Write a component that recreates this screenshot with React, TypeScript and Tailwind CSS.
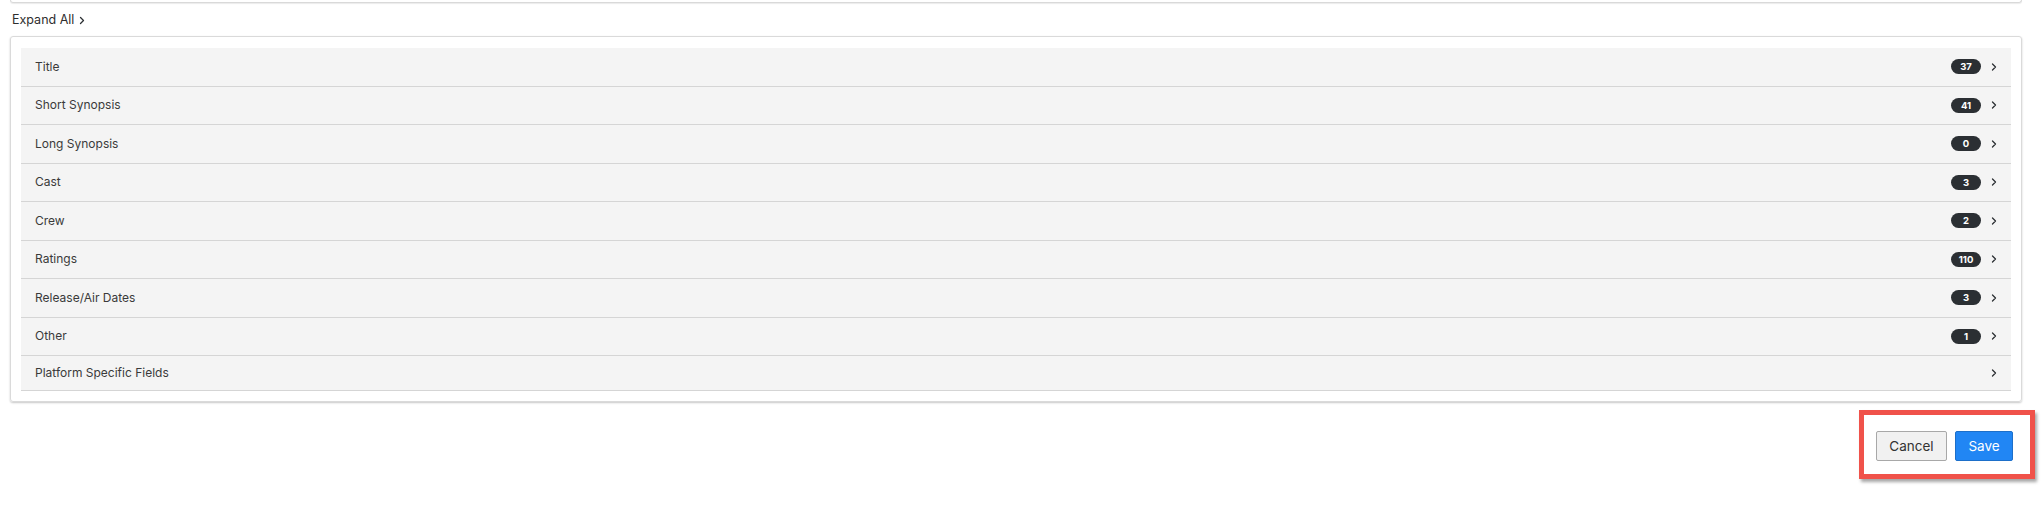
import React from "react";

const rows: { label: string; count?: string }[] = [
  { label: "Title", count: "37" },
  { label: "Short Synopsis", count: "41" },
  { label: "Long Synopsis", count: "0" },
  { label: "Cast", count: "3" },
  { label: "Crew", count: "2" },
  { label: "Ratings", count: "110" },
  { label: "Release/Air Dates", count: "3" },
  { label: "Other", count: "1" },
  { label: "Platform Specific Fields" },
];

function Chevron({ className }: { className?: string }) {
  return (
    <svg viewBox="0 0 6 8" className={className} fill="none">
      <path d="M1.5 1 L4.5 4 L1.5 7" stroke="#2b2f33" strokeWidth="1.3" strokeLinecap="round" strokeLinejoin="round" />
    </svg>
  );
}

export default function App() {
  return (
    <div
      className="min-h-[511px] w-[2044px] bg-white text-[#333333]"
      style={{ fontFamily: "Inter, 'Open Sans', Arial, sans-serif" }}
    >
      <div className="pl-[10px] pr-[22px]">
        <div className="h-[3px] rounded-b-[3px] border-x border-b border-[#d9d9d9] shadow-[0_1px_1px_rgba(0,0,0,0.08)]" />
        <div className="mt-[9px] flex h-[16px] items-center gap-[5px] pl-[2px] text-[12.5px] leading-[16px] text-[#2e2e2e]">
          <span>Expand All</span>
          <Chevron className="h-[9px] w-[6px]" />
        </div>
        <div className="mt-[8px] rounded-[3px] border border-[#dadada] px-[10px] pt-[11px] pb-[10px] shadow-[0_1px_2px_rgba(0,0,0,0.22)]">
          <div className="bg-[#f4f4f4]">
            {rows.map((r, i) => (
              <div
                key={r.label}
                className={
                  "flex items-center border-b border-[#d5d5d5] pl-[14px] pr-[14px] " +
                  (i === rows.length - 1 ? "h-[35px]" : "h-[38.5px]")
                }
              >
                <span className="flex-1 text-[12px] text-[#3a3a3a]">{r.label}</span>
                {r.count !== undefined && (
                  <span className="flex h-[15px] w-[30px] items-center justify-center rounded-full bg-[#2b2f33] text-[9.5px] font-bold leading-none text-white">
                    {r.count}
                  </span>
                )}
                <Chevron className="ml-[10px] h-[8px] w-[6px]" />
              </div>
            ))}
          </div>
        </div>
        <div className="mt-[8px] flex justify-end">
          <div className="-mr-[13px] flex gap-[8px] border-[5px] border-[#f0524a] bg-white pt-[16px] pb-[13px] pl-[12px] pr-[17px] shadow-[2px_3px_3px_rgba(0,0,0,0.35)]">
            <button className="h-[30px] w-[71px] rounded-[2px] border border-[#a8a8a8] bg-[#f1f1f1] text-[13.5px] text-[#333333]">
              Cancel
            </button>
            <button className="h-[30px] w-[58px] rounded-[2px] border border-[#1d6fc9] bg-[#2186f4] text-[13.5px] text-white">
              Save
            </button>
          </div>
        </div>
      </div>
    </div>
  );
}
